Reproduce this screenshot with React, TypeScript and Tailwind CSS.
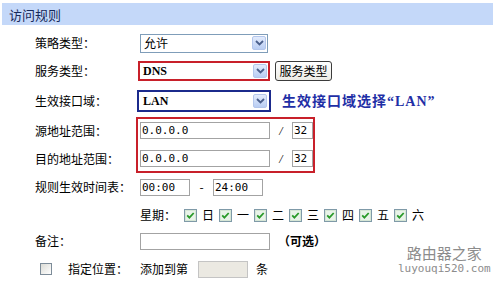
import React from "react";

const days = ["日", "一", "二", "三", "四", "五", "六"];

function Chevron() {
  return (
    <svg width="9" height="6" viewBox="0 0 9 6">
      <path d="M1 1l3.5 3.5L8 1" fill="none" stroke="#4a5f8c" strokeWidth="1.8" />
    </svg>
  );
}

// XP-style dropdown
function Select({ value, bold, boxed }: { value: string; bold?: boolean; boxed?: boolean }) {
  return (
    <div
      className={`flex w-[128px] items-center justify-between bg-white pl-[3px] pr-[1px] ${
        boxed ? "h-[16px]" : "h-[19px] border border-[#7f9db9]"
      }`}
    >
      <span className={bold ? "font-['Liberation_Serif',serif] text-[12px] font-bold" : ""}>{value}</span>
      <span className="flex h-[14px] w-[14px] items-center justify-center rounded-[2px] border border-[#b3c6ec] bg-gradient-to-b from-[#e3ebfc] to-[#b9cdf3]">
        <Chevron />
      </span>
    </div>
  );
}

function Input({ value, w, disabled }: { value?: string; w: string; disabled?: boolean }) {
  return (
    <div
      className={`flex h-[17px] items-center border border-[#a3a3a3] pl-[1px] font-['DejaVu_Sans_Mono',monospace] text-[11px] leading-none ${w} ${
        disabled ? "bg-[#ebe9e2] border-[#c4c4c4]" : "bg-white"
      }`}
    >
      {value}
    </div>
  );
}

function DayCheck() {
  return (
    <svg width="13" height="13" viewBox="0 0 13 13">
      <rect x="0.5" y="0.5" width="12" height="12" fill="#e9f3e9" stroke="#7f9aa8" />
      <rect x="1.5" y="1.5" width="10" height="10" fill="none" stroke="#d6e6d6" />
      <path d="M3.2 6.3l2.2 2.3 4.3-4.6" fill="none" stroke="#2a9a2a" strokeWidth="1.8" />
    </svg>
  );
}

function Label({ children }: { children: React.ReactNode }) {
  return <div className="w-[105px] shrink-0">{children}</div>;
}

export default function App() {
  return (
    <div className="relative h-[281px] w-[493px] overflow-hidden bg-white font-['Noto_Sans_CJK_SC',sans-serif] text-[12px] leading-none text-black">
      <div className="ml-[2px] mt-[3px] flex h-[22px] items-center bg-[#c4d8f9] pl-[7px] text-[13px] text-[#16295a]">
        访问规则
      </div>

      <div className="pl-[35px]">
        {/* 策略类型 */}
        <div className="mt-[4px] flex h-[28px] items-center">
          <Label>策略类型：</Label>
          <Select value="允许" />
        </div>

        {/* 服务类型 */}
        <div className="flex h-[28px] items-center">
          <Label>服务类型：</Label>
          <div className="-ml-[2px] border-2 border-[#c8202a]">
            <Select value="DNS" bold boxed />
          </div>
          <button className="ml-[5px] flex h-[20px] w-[57px] items-center justify-center rounded-[3px] border border-[#3c3c3c] bg-gradient-to-b from-white to-[#ecebe6] text-[12px]">
            服务类型
          </button>
        </div>

        {/* 生效接口域 */}
        <div className="flex h-[30px] items-center pt-[2px]">
          <Label>生效接口域：</Label>
          <div className="-ml-[3px] border-2 border-[#1b2a8c] p-[1px]">
            <Select value="LAN" bold boxed />
          </div>
          <span className="ml-[11px] text-[14px] font-bold tracking-[1px] text-[#1f2fa6]">
            生效接口域选择<span className="font-['Liberation_Serif',serif]">“LAN”</span>
          </span>
        </div>

        {/* 地址范围 */}
        <div className="mt-[2px] flex">
          <div className="w-[101px] shrink-0 pt-[5px]">
            <div className="flex h-[17px] items-center">源地址范围：</div>
            <div className="mt-[11px] flex h-[17px] items-center">目的地址范围：</div>
          </div>
          <div className="border-2 border-[#c8202a] pb-[4px] pl-[2px] pt-[3px]">
            {[0, 1].map((i) => (
              <div key={i} className={`flex h-[17px] items-center ${i ? "mt-[11px]" : ""}`}>
                <Input value="0.0.0.0" w="w-[130px]" />
                <span className="w-[22px] text-center font-['Liberation_Serif',serif] italic">/</span>
                <Input value="32" w="w-[21px]" />
              </div>
            ))}
          </div>
        </div>

        {/* 时间表 */}
        <div className="flex h-[28px] items-center">
          <Label>规则生效时间表：</Label>
          <Input value="00:00" w="w-[50px]" />
          <span className="w-[23px] text-center">-</span>
          <Input value="24:00" w="w-[50px]" />
        </div>

        {/* 星期 */}
        <div className="flex h-[28px] items-center">
          <div className="w-[105px] shrink-0" />
          <span className="w-[44px]">星期：</span>
          {days.map((d) => (
            <div key={d} className="flex w-[35px] items-center gap-[5px]">
              <DayCheck />
              <span>{d}</span>
            </div>
          ))}
        </div>

        {/* 备注 */}
        <div className="flex h-[24px] items-center">
          <Label>备注：</Label>
          <Input w="w-[130px]" />
          <span className="ml-[8px] font-bold">（可选）</span>
        </div>

        {/* 指定位置 */}
        <div className="mt-[2px] flex h-[28px] items-center">
          <div className="flex w-[105px] shrink-0 items-center">
            <span className="ml-[5px] h-[12px] w-[12px] border border-[#7d8c99] bg-gradient-to-br from-[#dcdcd6] to-white" />
            <span className="ml-[16px]">指定位置：</span>
          </div>
          <span>添加到第</span>
          <div className="ml-[10px]">
            <Input w="w-[50px]" disabled />
          </div>
          <span className="ml-[8px]">条</span>
        </div>
      </div>

      {/* watermark */}
      <div className="absolute left-[398px] top-[245px] flex flex-col items-center">
        <span className="h-[15px] text-[15px] leading-[15px] text-[#8c8c8c]">路由器之家</span>
        <span className="mt-[3px] h-[11px] font-['DejaVu_Sans_Mono',monospace] text-[11px] leading-[11px] text-[#8c8c8c]">luyouqi520.com</span>
      </div>
    </div>
  );
}
